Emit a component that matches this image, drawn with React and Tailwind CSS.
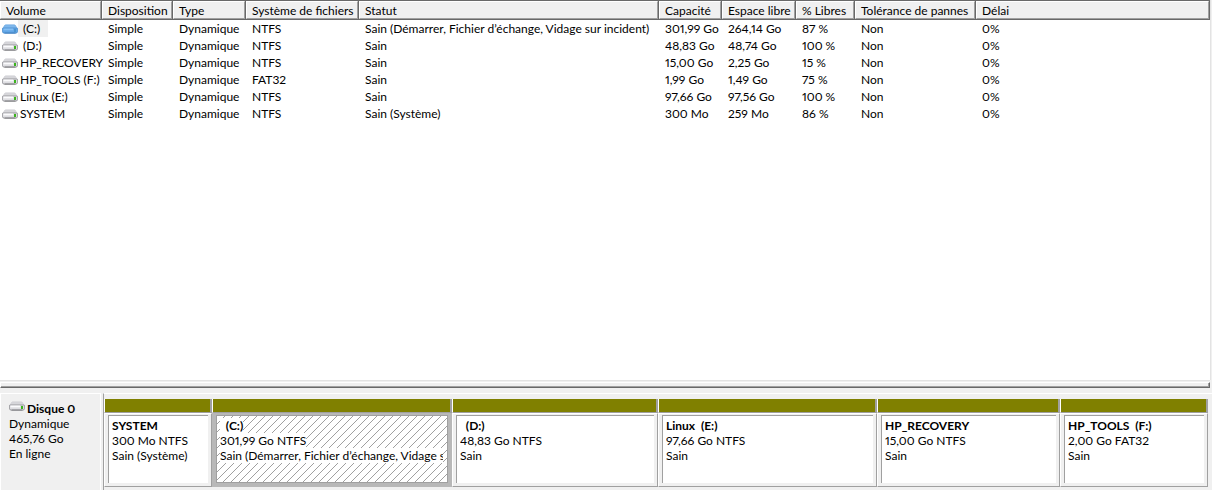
import clsx from 'clsx'

const columns = [
  { key: 'name', label: 'Volume', width: 'w-[102px]' },
  { key: 'layout', label: 'Disposition', width: 'w-[71px]' },
  { key: 'type', label: 'Type', width: 'w-[73px]' },
  { key: 'fs', label: 'Système de fichiers', width: 'w-[113px]' },
  { key: 'status', label: 'Statut', width: 'w-[300px]' },
  { key: 'capacity', label: 'Capacité', width: 'w-[63px]' },
  { key: 'free', label: 'Espace libre', width: 'w-[74px]' },
  { key: 'percent', label: '% Libres', width: 'w-[59px]' },
  { key: 'fault', label: 'Tolérance de pannes', width: 'w-[121px]' },
  { key: 'delay', label: 'Délai', width: 'w-auto' },
]

const common = { layout: 'Simple', type: 'Dynamique', fault: 'Non', delay: '0%' }

const volumes = [
  { name: ' (C:)', fs: 'NTFS', status: 'Sain (Démarrer, Fichier d’échange, Vidage sur incident)', capacity: '301,99 Go', free: '264,14 Go', percent: '87 %', selected: true },
  { name: ' (D:)', fs: 'NTFS', status: 'Sain', capacity: '48,83 Go', free: '48,74 Go', percent: '100 %' },
  { name: 'HP_RECOVERY', fs: 'NTFS', status: 'Sain', capacity: '15,00 Go', free: '2,25 Go', percent: '15 %' },
  { name: 'HP_TOOLS (F:)', fs: 'FAT32', status: 'Sain', capacity: '1,99 Go', free: '1,49 Go', percent: '75 %' },
  { name: 'Linux (E:)', fs: 'NTFS', status: 'Sain', capacity: '97,66 Go', free: '97,56 Go', percent: '100 %' },
  { name: 'SYSTEM', fs: 'NTFS', status: 'Sain (Système)', capacity: '300 Mo', free: '259 Mo', percent: '86 %' },
]

const partitions = [
  { name: 'SYSTEM', size: '300 Mo NTFS', status: 'Sain (Système)', grow: 108 },
  { name: '  (C:)', size: '301,99 Go NTFS', status: 'Sain (Démarrer, Fichier d’échange, Vidage sur incident)', grow: 240, selected: true },
  { name: '  (D:)', size: '48,83 Go NTFS', status: 'Sain', grow: 206 },
  { name: 'Linux  (E:)', size: '97,66 Go NTFS', status: 'Sain', grow: 219 },
  { name: 'HP_RECOVERY', size: '15,00 Go NTFS', status: 'Sain', grow: 183 },
  { name: 'HP_TOOLS  (F:)', size: '2,00 Go FAT32', status: 'Sain', grow: 148 },
]

function DriveIcon({ selected }) {
  return (
    <svg viewBox="0 0 16 10" className="h-[10px] w-4 shrink-0" aria-hidden="true">
      <path d="M3.8 .8h8.4q.8 0 1.3.7L15.2 4.5H.8L2.5 1.5Q3 .8 3.8 .8z" fill={selected ? '#7fb8ec' : '#d6d6da'} stroke={selected ? '#6aa6df' : '#cfcfd3'} strokeWidth=".6" />
      <path d="M1.4 4h13.2q1 0 1 1v2.2q0 2-2 2H2.4q-2 0-2-2V5q0-1 1-1z" fill={selected ? '#62a6e6' : '#dedee2'} stroke={selected ? '#4a8ccc' : '#8c8c90'} strokeWidth=".8" />
      <path d="M1.5 5.4h9.8" stroke={selected ? '#86c0f4' : '#fbfbfd'} strokeWidth="1.8" />
      <path d="M2.5 9h11" stroke={selected ? '#3a78b8' : '#6c6c70'} strokeWidth=".8" />
      <path d="M12 5h2v3h-2z" fill={selected ? '#4a94cf' : '#3cb41e'} />
    </svg>
  )
}

function Hatch() {
  return (
    <svg className="absolute inset-0 h-full w-full" shapeRendering="crispEdges" aria-hidden="true">
      <defs>
        <pattern id="hatch" width="8" height="8" patternUnits="userSpaceOnUse">
          <path d="M0 7h1v1H0zM1 6h1v1H1zM2 5h1v1H2zM3 4h1v1H3zM4 3h1v1H4zM5 2h1v1H5zM6 1h1v1H6zM7 0h1v1H7z" fill="#a0a0a0" />
        </pattern>
      </defs>
      <rect width="100%" height="100%" fill="url(#hatch)" />
    </svg>
  )
}

function VolumeTable() {
  return (
    <table className="w-full table-fixed border-collapse">
      <thead>
        <tr className="h-5">
          {columns.map((col) => (
            <th key={col.key} scope="col" className={clsx('p-0 text-left font-normal', col.width)}>
              <div className="h-5 border-t border-r border-b border-[#696969] bg-[#f0f0f0]">
                <div className="h-[18px] border-t border-r border-b border-l border-t-white border-r-[#a0a0a0] border-b-[#a0a0a0] border-l-white pl-[5px] leading-[18px]">
                  {col.label}
                </div>
              </div>
            </th>
          ))}
        </tr>
      </thead>
      <tbody>
        {volumes.map((volume) => (
          <tr key={volume.name} className="h-[17px]">
            {columns.map((col) => (
              <td key={col.key} className="p-0 leading-[17px]">
                {col.key === 'name' ? (
                  <div className="flex items-center pl-[2px]">
                    <DriveIcon selected={volume.selected} />
                    <span className={clsx('pl-[2px] whitespace-pre', volume.selected && 'bg-[#f0f0f0] pr-2')}>{volume.name}</span>
                  </div>
                ) : (
                  <div className="pl-1.5">{volume[col.key] ?? common[col.key]}</div>
                )}
              </td>
            ))}
          </tr>
        ))}
      </tbody>
    </table>
  )
}

function Partition({ name, size, status, grow, selected }) {
  const label = clsx('inline-block', selected && 'bg-white')

  return (
    <div className="flex min-w-0 basis-0 flex-col" style={{ flexGrow: grow }}>
      <div className="h-[14px] border-r-2 border-b border-l border-r-[#a0a0a0] border-b-[#a0a0a0] border-l-white bg-[#808000]" />
      <div
        className={clsx(
          'min-h-0 flex-1 border px-[3px] pt-px pb-[3px]',
          selected ? 'border-[#b8b8b8] bg-[#b8b8b8]' : 'border-t-white border-r-[#a0a0a0] border-b-[#a0a0a0] border-l-white bg-[#f0f0f0]'
        )}
      >
        <div
          className={clsx(
            'relative h-full overflow-hidden border-t border-l border-[#a0a0a0] bg-white pt-[2px] pl-[3px] leading-[15px] whitespace-pre',
            selected && 'border-r border-b pr-1'
          )}
        >
          {selected && <Hatch />}
          <div className="relative overflow-hidden">
            <div><span className={clsx(label, 'font-bold')}>{name}</span></div>
            <div><span className={label}>{size}</span></div>
            <div><span className={label}>{status}</span></div>
          </div>
        </div>
      </div>
    </div>
  )
}

export default function App() {
  return (
    <main className="flex h-screen flex-col overflow-hidden bg-[#f0f0f0] font-['Lato','Open_Sans',sans-serif] text-[12px] text-black proportional-nums">
      <section className="mr-px min-h-0 flex-1 border-r border-[#e3e3e3] bg-white whitespace-nowrap">
        <VolumeTable />
      </section>
      <div className="mr-[2px] border-t border-[#e3e3e3] pt-px">
        <div className="h-[6px] border-t border-r border-b border-l border-t-white border-r-[#696969] border-b-[#696969] border-l-white">
          <div className="h-1 border-r border-b border-[#a0a0a0]" />
        </div>
      </div>
      <section className="flex h-[102px] pt-[5px]">
        <aside className="w-[101px] border-t border-r border-l border-white pt-[7px] pl-2 leading-[15px]">
          <div className="flex gap-[2px] font-bold">
            <DriveIcon />
            Disque 0
          </div>
          <div>Dynamique</div>
          <div>465,76 Go</div>
          <div>En ligne</div>
        </aside>
        <div className="ml-[2px] flex min-w-0 flex-1 border-t border-l border-t-white border-l-[#a0a0a0] pt-[5px] pr-1 pb-[3px]">
          {partitions.map((partition) => (
            <Partition key={partition.name} {...partition} />
          ))}
        </div>
      </section>
    </main>
  )
}
